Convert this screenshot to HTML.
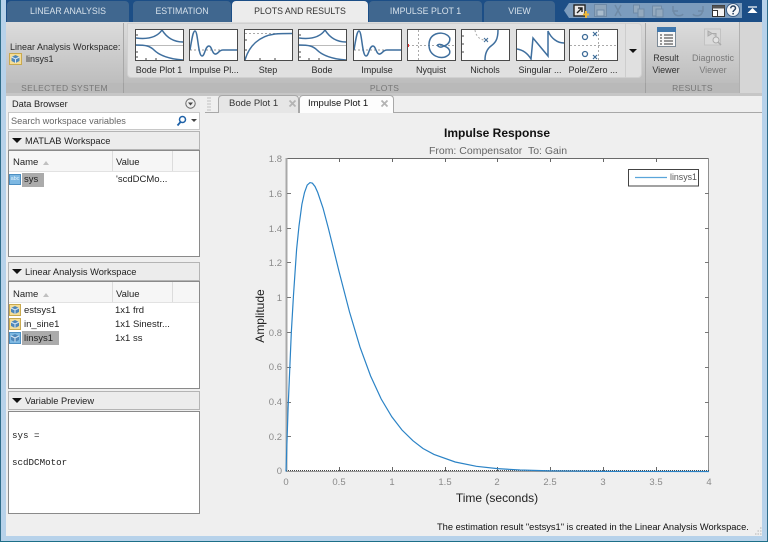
<!DOCTYPE html>
<html><head><meta charset="utf-8"><style>
html,body{margin:0;padding:0;background:#b7d2ea}
body{width:768px;height:542px;overflow:hidden;position:relative;font-family:"Liberation Sans",sans-serif;font-size:10px;color:#222}
#w{position:absolute;left:0;top:0;width:768px;height:542px;overflow:hidden;filter:blur(.3px)}
div,svg{position:absolute;box-sizing:border-box}
.t{white-space:nowrap;line-height:12px}
.c{text-align:center}
.tab{top:1px;height:21px;background:#40678f;border-radius:4px 4px 0 0;color:#d5e0ea;font-size:8.800px;text-align:center;line-height:20px}
.thumb{top:29px;width:49px;height:32px;background:#fff;border:1px solid #4a4a4a;border-bottom-width:1px}
.lab{top:65px;font-size:9px;color:#2a2a2a;text-align:center;white-space:nowrap;line-height:11px}
.sec{top:83px;font-size:8.500px;color:#777;text-align:center;line-height:11px;letter-spacing:.3px}
.hdr{left:8px;width:192px;background:#ececec;border:1px solid #b4b4b4;height:19px;font-size:9.300px;line-height:18px;padding-left:16px;color:#222}
.hdr:before{content:"";position:absolute;left:3px;top:6px;border-left:5px solid transparent;border-right:5px solid transparent;border-top:5px solid #111}
.box{left:8px;width:192px;background:#fff;border:1px solid #8a8a8a;border-width:1px 1px 1px 1px}
.th{left:0;right:0;top:0;height:21px;background:#f6f6f6;border-bottom:1px solid #e2e2e2}
.v{position:absolute;top:0;bottom:0;width:1px;background:#dcdcdc}
.sel{background:#ababab;height:14px}
.ax{font-size:9.500px;color:#8a8a8a;line-height:11px;white-space:nowrap}
.cv{fill:none;stroke:#3f6f9e;stroke-width:1.500}
</style></head><body><div id="w">
<!-- frame -->
<div style="left:0;top:0;width:768px;height:542px;background:#b7d2ea"></div>
<div style="left:0;top:0;width:1px;height:542px;background:#2f6d8a"></div>
<div style="left:767px;top:0;width:1px;height:542px;background:#2f6d8a"></div>
<div style="left:0;top:541px;width:768px;height:1px;background:#1d6f88"></div>
<div style="left:6px;top:0;width:756px;height:536px;background:#efefef"></div>
<!-- title tab bar -->
<div style="left:6px;top:0;width:756px;height:22px;background:#1c4e86"></div>
<div class="tab" style="left:7px;width:122px">LINEAR ANALYSIS</div>
<div class="tab" style="left:133px;width:98px">ESTIMATION</div>
<div class="tab" style="left:232px;width:136px;background:#ececec;color:#333">PLOTS AND RESULTS</div>
<div class="tab" style="left:369px;width:113px">IMPULSE PLOT 1</div>
<div class="tab" style="left:484px;width:71px">VIEW</div>
<svg style="left:562px;top:2px" width="182" height="17"><path d="M2 8.500 7 1H180V16H7Z" fill="#7c9cbd"/></svg>
<!-- quick icons -->
<svg style="left:572px;top:2px" width="195" height="18" viewBox="572 2 195 18">
<rect x="574" y="5" width="11" height="11" fill="#e8e8e8" stroke="#222" stroke-width="1.400"/><path d="M577 13 582 8M578 8h4v4" stroke="#222" fill="none" stroke-width="1.400"/><path d="M586 11v7M583 14.500h6" stroke="#f0b93a" stroke-width="2"/>
<g fill="#8fa5ba" stroke="#6f8aa6"><rect x="594.500" y="4.500" width="12" height="12"/><rect x="597" y="10" width="7" height="6" fill="#a9bccd"/></g>
<path d="M615 16 621 5M621 16 615 5" stroke="#6f8aa6" stroke-width="1.500"/>
<g fill="#93a9be" stroke="#6f8aa6"><rect x="633.500" y="5" width="6" height="8"/><rect x="638" y="9" width="6" height="8"/><rect x="652.500" y="6" width="9" height="10"/><rect x="656" y="9" width="7" height="8"/></g>
<path d="M683 14c-1 2-7 3-9-1l-1-3M673 6v5h5" stroke="#6f8aa6" fill="none" stroke-width="1.500"/>
<path d="M693 14c1 2 7 3 9-1l1-3M703 6v5h-5" stroke="#6f8aa6" fill="none" stroke-width="1.500"/>
<rect x="712.500" y="5.500" width="12" height="11" fill="#f2f2f2" stroke="#333"/><rect x="712.500" y="5.500" width="12" height="3" fill="#555"/><rect x="712.500" y="10.500" width="5" height="6" fill="#fff" stroke="#333"/>
<circle cx="733" cy="10" r="6.500" fill="#f4f6f8" stroke="#3b5e86"/><path d="M730.700 8.300c.2-3 4.800-3 4.800 0 0 2-2.400 1.800-2.400 3.800M733.100 13v1.500" stroke="#28415f" fill="none" stroke-width="1.500"/>
<path d="M748 7h9" stroke="#fff" stroke-width="1.200"/><path d="M747.500 13 752.500 8l5 5Z" fill="#fff"/>
</svg>
<!-- ribbon -->
<div style="left:6px;top:22px;width:756px;height:74px;background:linear-gradient(#dcdcdc,#c0c0c0 75%,#b4b4b4)"></div>
<div style="left:127px;top:23px;width:515px;height:55px;background:#e0e0e0;border:1px solid #d0d0d0;border-radius:0 4px 4px 4px"></div>
<div style="left:625px;top:23px;width:1px;height:55px;background:#cdcdcd"></div>
<div style="left:123px;top:23px;width:1px;height:70px;background:#a8a8a8"></div>
<div style="left:645px;top:23px;width:1px;height:70px;background:#a8a8a8"></div>
<div style="left:739px;top:22px;width:23px;height:72px;background:#d6d6d6;border-left:1px solid #b0b0b0"></div>
<div style="left:6px;top:83px;width:733px;height:10px;background:#b9b9b9"></div>
<div style="left:123px;top:83px;width:1px;height:10px;background:#a0a0a0"></div>
<div style="left:645px;top:83px;width:1px;height:10px;background:#a0a0a0"></div>
<div style="left:6px;top:93px;width:756px;height:3px;background:#c6c6c6"></div>
<div class="t" style="left:10px;top:41px;font-size:9px;color:#2a2a2a">Linear Analysis Workspace:</div>
<svg style="left:9px;top:53px" width="14" height="12"><rect x=".5" y=".5" width="12" height="11" fill="#f5dd96" stroke="#c9a94e"/><path d="M6.500 2 10.500 4v4L6.500 10 2.500 8V4Z" fill="#4f86b8"/><path d="M2.500 4 6.500 6 10.500 4M6.500 6v4" stroke="#d9e8f4" fill="none"/></svg>
<div class="t" style="left:26px;top:53px;font-size:9px;color:#2a2a2a">linsys1</div>
<div class="sec" style="left:6px;width:117px">SELECTED SYSTEM</div>
<div class="sec" style="left:124px;width:521px">PLOTS</div>
<div class="sec" style="left:646px;width:93px">RESULTS</div>
<!-- thumbs -->
<svg class="thumb" style="left:135px" viewBox="0 0 47 30"><path d="M0 15.500H47" stroke="#bbb"/><path class="cv" d="M0 8C8 9 20 9 26 0 31 8 38 12 47 12"/><path class="cv" d="M0 15C10 15 14 16 18 20 24 26 34 29 47 30"/><path d="M0 5h2M0 22h2M0 27h2M10 30v-2M20 30v-2" stroke="#444"/></svg>
<svg class="thumb" style="left:189px" viewBox="0 0 47 30"><path d="M0 20H47" stroke="#999" stroke-dasharray="2 2"/><path class="cv" d="M0 20C2 8 3 1 5 1 8 1 8 26 12 26 15 26 15 16 19 16 22 16 22 25 26 24 29 23 29 20 33 20H47"/></svg>
<svg class="thumb" style="left:244px" viewBox="0 0 47 30"><path d="M0 3.500H47" stroke="#aaa" stroke-dasharray="2 2"/><path class="cv" d="M0 30C4 16 14 6 30 4 36 3.500 42 3.500 47 3.500"/><path d="M0 10h2M0 20h2M15 30v-2M30 30v-2" stroke="#444"/></svg>
<svg class="thumb" style="left:298px" viewBox="0 0 47 30"><path d="M0 15.500H47" stroke="#bbb"/><path class="cv" d="M0 8C8 9 20 9 26 0 31 8 38 12 47 12"/><path class="cv" d="M0 15C10 15 14 16 18 20 24 26 34 29 47 30"/><path d="M0 5h2M0 22h2M0 27h2M10 30v-2M20 30v-2" stroke="#444"/></svg>
<svg class="thumb" style="left:353px" viewBox="0 0 47 30"><path d="M0 20H47" stroke="#999" stroke-dasharray="2 2"/><path class="cv" d="M0 20C2 8 3 1 5 1 8 1 8 26 12 26 15 26 15 16 19 16 22 16 22 25 26 24 29 23 29 20 33 20H47"/></svg>
<svg class="thumb" style="left:407px" viewBox="0 0 47 30"><path d="M0 15.500H47M10.500 0V30" stroke="#aaa" stroke-dasharray="2 2"/><path d="M0 14v3" stroke="#e33" stroke-width="2"/><path class="cv" d="M36 16C42 14 44 8 39 5 33 1 21 3 21 15 21 26 33 30 39 26 44 23 42 18 36 16 32 13 28 15 30 16 32 18 34 17 36 16Z"/></svg>
<svg class="thumb" style="left:461px" viewBox="0 0 47 30"><path d="M13 0C14 7 19 11 26 10" fill="none" stroke="#aaa" stroke-dasharray="2 2"/><path d="M22 8l4 4M26 8l-4 4" stroke="#3d6b97"/><path class="cv" d="M36 0C36 10 33 13 29 16 25 19 23 23 23 30"/><path d="M0 6h2M0 14h2M0 22h2" stroke="#444"/></svg>
<svg class="thumb" style="left:516px" viewBox="0 0 47 30"><path class="cv" d="M0 19C6 20 11 24 14 29L16 8 31 26 31 1C34 8 40 13 47 13"/></svg>
<svg class="thumb" style="left:569px" viewBox="0 0 47 30"><path d="M0 15.500H47M28.500 0V30" stroke="#aaa" stroke-dasharray="2 2"/><circle cx="15" cy="7" r="2.500" fill="#fff" stroke="#3d6b97" stroke-width="1.300"/><circle cx="15" cy="24" r="2.500" fill="#fff" stroke="#3d6b97" stroke-width="1.300"/><path d="M23 2l4 4M27 2l-4 4M23 25l4 4M27 25l-4 4" stroke="#3d6b97" stroke-width="1.200"/></svg>
<div class="lab" style="left:130px;width:58px">Bode Plot 1</div>
<div class="lab" style="left:185px;width:58px">Impulse Pl...</div>
<div class="lab" style="left:239px;width:58px">Step</div>
<div class="lab" style="left:293px;width:58px">Bode</div>
<div class="lab" style="left:348px;width:58px">Impulse</div>
<div class="lab" style="left:402px;width:58px">Nyquist</div>
<div class="lab" style="left:456px;width:58px">Nichols</div>
<div class="lab" style="left:511px;width:58px">Singular ...</div>
<div class="lab" style="left:564px;width:58px">Pole/Zero ...</div>
<div style="left:629px;top:49px;border-left:4px solid transparent;border-right:4px solid transparent;border-top:4px solid #111"></div>
<svg style="left:656px;top:26px" width="22" height="22"><rect x="1.500" y="1.500" width="18" height="19" fill="#f8f8f8" stroke="#7d8a96"/><rect x="1" y="1" width="19" height="5" fill="#3f77ad"/><path d="M4 9h2M8 9h9M4 12h2M8 12h9M4 15h2M8 15h9M4 18h2M8 18h9" stroke="#333"/></svg>
<svg style="left:703px;top:27px" width="22" height="20"><rect x="1.500" y="2" width="16" height="16" fill="#dadada" stroke="#c2c2c2"/><path d="M5 4v5l4-2.500Zm4 2.500 h4v4" fill="#c4c4c4" stroke="#aaa"/><circle cx="13" cy="13" r="3" fill="#e4e4e4" stroke="#aaa"/><path d="M15 15l3 3" stroke="#aaa" stroke-width="1.500"/></svg>
<div class="lab" style="left:646px;width:40px;top:53px;color:#333;line-height:11.500px">Result<br>Viewer</div>
<div class="lab" style="left:689px;width:48px;top:53px;color:#7a7a7a;line-height:11.500px">Diagnostic<br>Viewer</div>
<!-- left panel -->
<div style="left:8px;top:96px;width:192px;height:16px;background:#ececec"></div>
<div class="t" style="left:12px;top:98px;font-size:9.200px;color:#222">Data Browser</div>
<svg style="left:184px;top:97px" width="14" height="14"><circle cx="6.500" cy="6.500" r="4.700" fill="#eee" stroke="#666"/><path d="M4 5.500h5L6.500 8.500Z" fill="#444"/></svg>
<div style="left:8px;top:112px;width:192px;height:18px;background:#fff;border:1px solid #c8c8c8"></div>
<div class="t" style="left:11px;top:115px;font-size:9.200px;color:#666">Search workspace variables</div>
<svg style="left:175px;top:114px" width="24" height="14"><circle cx="7.500" cy="5.500" r="3" fill="none" stroke="#1f62a8" stroke-width="1.500"/><path d="M5.500 8 2.500 11.500" stroke="#1f62a8" stroke-width="1.800"/><path d="M16 5h6l-3 3Z" fill="#444"/></svg>

<div class="hdr" style="top:131px">MATLAB Workspace</div>
<div class="box" style="top:150px;height:107px"><div class="th"><i class="v" style="left:103px"></i><i class="v" style="left:163px"></i></div>
<div class="t" style="left:4px;top:6px;font-size:9.500px">Name</div><div style="left:34px;top:10px;border-left:3.500px solid transparent;border-right:3.500px solid transparent;border-bottom:4px solid #c0c0c0"></div>
<div class="t" style="left:107px;top:6px;font-size:9.500px">Value</div></div>
<div style="left:9px;top:174px;width:12px;height:11px;background:#7db8e2;border:1px solid #4d8fc2;color:#e4f2fb;font-size:5.500px;line-height:9px;text-align:center">abc</div>
<div class="sel" style="left:22px;top:173px;width:22px"></div>
<div class="t" style="left:24px;top:174px;font-size:9.500px">sys</div>
<div class="t" style="left:116px;top:174px;font-size:9.500px">'scdDCMo...</div>

<div class="hdr" style="top:262px">Linear Analysis Workspace</div>
<div class="box" style="top:281px;height:108px"><div class="th"><i class="v" style="left:103px"></i><i class="v" style="left:163px"></i></div>
<div class="t" style="left:4px;top:7px;font-size:9.500px">Name</div><div style="left:34px;top:11px;border-left:3.500px solid transparent;border-right:3.500px solid transparent;border-bottom:4px solid #c0c0c0"></div>
<div class="t" style="left:107px;top:7px;font-size:9.500px">Value</div></div>
<svg style="left:9px;top:304px" width="14" height="12"><rect x=".5" y=".5" width="11" height="11" fill="#f5dd96" stroke="#c9a94e"/><path d="M6 2 10 4v4L6 10 2 8V4Z" fill="#4f86b8"/><path d="M2 4 6 6 10 4M6 6v4" stroke="#d9e8f4" fill="none"/></svg>
<svg style="left:9px;top:318px" width="14" height="12"><rect x=".5" y=".5" width="11" height="11" fill="#f5dd96" stroke="#c9a94e"/><path d="M6 2 10 4v4L6 10 2 8V4Z" fill="#4f86b8"/><path d="M2 4 6 6 10 4M6 6v4" stroke="#d9e8f4" fill="none"/></svg>
<svg style="left:9px;top:332px" width="14" height="12"><rect x=".5" y=".5" width="11" height="11" fill="#7db8e2" stroke="#4d8fc2"/><path d="M6 2 10 4v4L6 10 2 8V4Z" fill="#4f86b8"/><path d="M2 4 6 6 10 4M6 6v4" stroke="#d9e8f4" fill="none"/></svg>
<div class="sel" style="left:22px;top:331px;width:37px"></div>
<div class="t" style="left:24px;top:305px;font-size:9.500px">estsys1</div>
<div class="t" style="left:24px;top:319px;font-size:9.500px">in_sine1</div>
<div class="t" style="left:24px;top:333px;font-size:9.500px">linsys1</div>
<div class="t" style="left:115px;top:305px;font-size:9.500px">1x1 frd</div>
<div class="t" style="left:115px;top:319px;font-size:9.500px">1x1 Sinestr...</div>
<div class="t" style="left:115px;top:333px;font-size:9.500px">1x1 ss</div>

<div class="hdr" style="top:391px">Variable Preview</div>
<div class="box" style="top:411px;height:103px"></div>
<div class="t" style="left:12px;top:430px;font:9.200px/12px 'Liberation Mono',monospace;color:#222">sys =</div>
<div class="t" style="left:12px;top:457px;font:9.200px/12px 'Liberation Mono',monospace;color:#222">scdDCMotor</div>

<!-- tabs -->
<svg style="left:206px;top:97px" width="6" height="14"><path d="M1 1h4M1 4h4M1 7h4M1 10h4M1 13h4" stroke="#c0c0c0"/></svg>
<div style="left:205px;top:112px;width:557px;height:1px;background:#a8a8a8"></div>
<div style="left:218px;top:95px;width:81px;height:18px;background:#e6e6e6;border:1px solid #a8a8a8;border-bottom:0;border-radius:4px 4px 0 0"></div>
<div style="left:299px;top:95px;width:95px;height:18px;background:#fdfdfd;border:1px solid #a8a8a8;border-bottom:0;border-radius:4px 4px 0 0"></div>
<div class="t" style="left:229px;top:98px;font-size:9.500px;color:#333">Bode Plot 1</div>
<div class="t" style="left:308px;top:98px;font-size:9.500px;color:#111">Impulse Plot 1</div>
<svg style="left:288px;top:99px" width="10" height="10"><path d="M1.500 1.500l6 6M7.500 1.500l-6 6" stroke="#b4b4b4" stroke-width="1.800"/></svg>
<svg style="left:380px;top:99px" width="10" height="10"><path d="M1.500 1.500l6 6M7.500 1.500l-6 6" stroke="#b4b4b4" stroke-width="1.800"/></svg>

<!-- plot -->
<div class="t c" style="left:397px;width:200px;top:126px;font-size:12px;font-weight:bold;color:#111;line-height:14px">Impulse Response</div>
<div class="t c" style="left:398px;width:200px;top:145px;font-size:10.500px;color:#666;line-height:13px">From: Compensator&nbsp; To: Gain</div>
<svg style="left:280px;top:150px" width="436" height="330" viewBox="280 150 436 330">
<rect x="286" y="158" width="423" height="313.500" fill="#fff"/>
<path d="M286.500 158.500H709" fill="none" stroke="#6a6a6a"/>
<path d="M708.500 158V471.500" fill="none" stroke="#909090"/>
<path d="M286.500 158V471.500" stroke="#a8a8a8" stroke-width="2"/>
<path d="M286 471.500H709" stroke="#9a9a9a" stroke-width="1"/>
<path d="M339.500 471V467M392.500 471V467M445.500 471V467M497.500 471V467M550.500 471V467M603.500 471V467M656.500 471V467M339.500 158V162M392.500 158V162M445.500 158V162M497.500 158V162M550.500 158V162M603.500 158V162M656.500 158V162" stroke="#666"/>
<path d="M287 436.500h4M287 402.500h4M287 367.500h4M287 332.500h4M287 297.500h4M287 262.500h4M287 228.500h4M287 193.500h4M709 436.500h-4M709 402.500h-4M709 367.500h-4M709 332.500h-4M709 297.500h-4M709 262.500h-4M709 228.500h-4M709 193.500h-4" stroke="#777"/>
<path d="M286 470.500H709" stroke="#444" stroke-dasharray="1 1"/>
<polyline fill="none" stroke="#2b83c6" stroke-width="1.200" points="286,471.500 288.100,407.900 291.300,332.800 293.500,295 296.600,249.400 299,226 301.900,204.300 304.500,192.500 307.200,185.100 310,182.600 312.400,183.200 315,186.500 317.700,192.400 323,208 328.300,228 333.500,249 338.900,271 349.500,311.900 360,347.100 370.600,376 381.200,399 391.800,416.800 402,430 412.900,440.700 423,448.500 434,454.400 455.200,462 476.400,466.300 497.500,468.600 520,470 550.400,470.900 603.300,471.400 709,471.500"/>
<rect x="628.500" y="169.500" width="70" height="16.500" fill="#fff" stroke="#444"/>
<path d="M635 177.500H667" stroke="#5aa5da" stroke-width="1.200"/>
</svg>
<div class="t" style="left:670px;top:171px;font-size:8.800px;color:#555">linsys1</div>
<div class="ax" style="left:262px;width:20px;text-align:right;top:154px">1.8</div>
<div class="ax" style="left:262px;width:20px;text-align:right;top:189px">1.6</div>
<div class="ax" style="left:262px;width:20px;text-align:right;top:224px">1.4</div>
<div class="ax" style="left:262px;width:20px;text-align:right;top:258px">1.2</div>
<div class="ax" style="left:262px;width:20px;text-align:right;top:293px">1</div>
<div class="ax" style="left:262px;width:20px;text-align:right;top:328px">0.8</div>
<div class="ax" style="left:262px;width:20px;text-align:right;top:362px">0.6</div>
<div class="ax" style="left:262px;width:20px;text-align:right;top:397px">0.4</div>
<div class="ax" style="left:262px;width:20px;text-align:right;top:432px">0.2</div>
<div class="ax" style="left:262px;width:20px;text-align:right;top:466px">0</div>
<div class="ax c" style="left:271px;width:30px;top:477px">0</div>
<div class="ax c" style="left:324px;width:30px;top:477px">0.5</div>
<div class="ax c" style="left:377px;width:30px;top:477px">1</div>
<div class="ax c" style="left:430px;width:30px;top:477px">1.5</div>
<div class="ax c" style="left:482px;width:30px;top:477px">2</div>
<div class="ax c" style="left:535px;width:30px;top:477px">2.5</div>
<div class="ax c" style="left:588px;width:30px;top:477px">3</div>
<div class="ax c" style="left:641px;width:30px;top:477px">3.5</div>
<div class="ax c" style="left:694px;width:30px;top:477px">4</div>
<div class="t c" style="left:397px;width:200px;top:491px;font-size:12px;color:#222;line-height:14px">Time (seconds)</div>
<div class="t c" style="left:210px;width:100px;top:309px;font-size:12px;color:#222;line-height:14px;transform:rotate(-90deg)">Amplitude</div>
<div class="t" style="left:437px;top:521px;font-size:9.300px;color:#111">The estimation result "estsys1" is created in the Linear Analysis Workspace.</div>
<svg style="left:754px;top:527px" width="8" height="9"><path d="M6 1h1.500M3.500 4H5M6 4h1.500M1 7h1.500M3.500 7H5M6 7h1.500" stroke="#b5b5b5"/></svg>
</div></body></html>
